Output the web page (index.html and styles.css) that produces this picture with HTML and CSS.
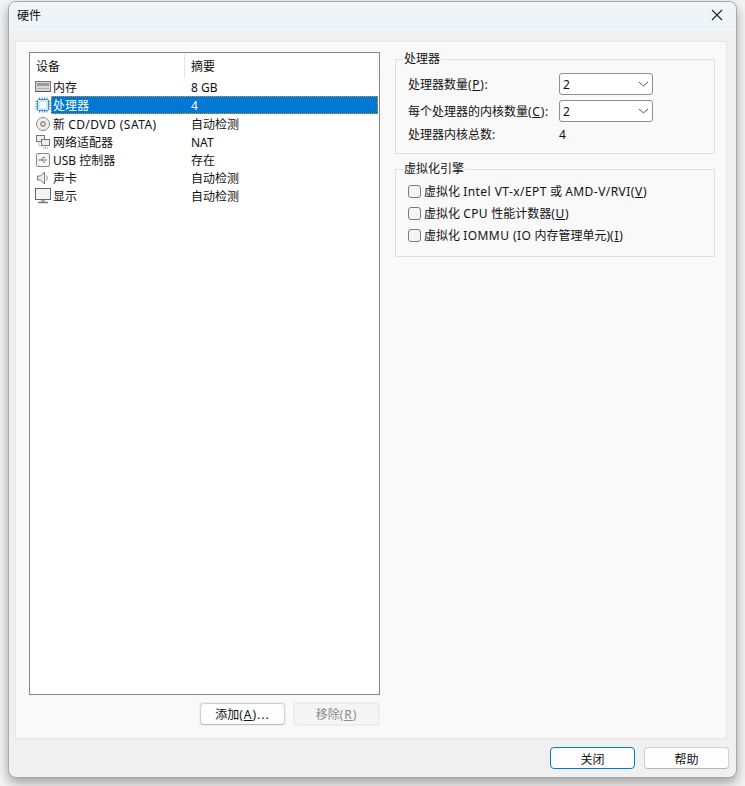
FILE: index.html
```html
<!DOCTYPE html>
<html lang="zh-CN">
<head>
  <meta charset="UTF-8">
  <title>硬件</title>
  <link rel="stylesheet" href="styles.css">
</head>
<body>
  <div class="window">
    <!-- 标题栏 -->
    <div class="titlebar">
      <span class="title">硬件</span>
      <svg class="close" width="12" height="12" viewBox="0 0 12 12"><path d="M1 1L11 11M11 1L1 11" stroke="#222" stroke-width="1.1" fill="none"/></svg>
    </div>

    <div class="panel">
      <!-- 设备列表 -->
      <div class="left">
        <div class="list">
          <div class="list-head">
            <div class="col-device">设备</div>
            <div class="col-summary">摘要</div>
          </div>
          <div class="row">
            <div class="col-device">
              <svg class="icon" viewBox="0 0 16 16"><rect x="0.5" y="2.5" width="15" height="10" fill="#d8d8d8" stroke="#777"/><rect x="2" y="4" width="12" height="3" fill="#9a9a9a"/><path d="M2 9.5H14" stroke="#b0b0b0"/><path d="M0.5 12.5H15.5" stroke="#555"/></svg>
              <span>内存</span>
            </div>
            <div class="col-summary">8 GB</div>
          </div>
          <div class="row selected">
            <div class="col-device">
              <svg class="icon" viewBox="0 0 16 16"><rect x="2.5" y="2.5" width="11" height="11" rx="1" fill="#cfe6f7" stroke="#3f8fcb"/><rect x="5" y="5" width="6" height="6" fill="#fff"/><path d="M4.5 0.5V2M7 0.5V2M9.5 0.5V2M12 0.5V2M4.5 14V15.5M7 14V15.5M9.5 14V15.5M12 14V15.5M0.5 4.5H2M0.5 7H2M0.5 9.5H2M0.5 12H2M14 4.5H15.5M14 7H15.5M14 9.5H15.5M14 12H15.5" stroke="#3f8fcb"/></svg>
              <span class="sel-text">处理器</span>
            </div>
            <div class="col-summary">4</div>
          </div>
          <div class="row">
            <div class="col-device">
              <svg class="icon" viewBox="0 0 16 16"><circle cx="8" cy="8" r="6.5" fill="#eee" stroke="#888"/><circle cx="8" cy="8" r="2.5" fill="#bbb" stroke="#888"/><circle cx="8" cy="8" r="0.8" fill="#fff"/></svg>
              <span>新 <span class="lat">CD/DVD (SATA)</span></span>
            </div>
            <div class="col-summary">自动检测</div>
          </div>
          <div class="row">
            <div class="col-device">
              <svg class="icon" viewBox="0 0 16 16"><rect x="1.5" y="1.5" width="8" height="6" fill="#eee" stroke="#777"/><rect x="6.5" y="5.5" width="8" height="6" fill="#eee" stroke="#777"/><path d="M10.5 11.5V14M8 14H13M4 7.5V12H6.5" stroke="#888" fill="none" stroke-dasharray="1 1"/></svg>
              <span>网络适配器</span>
            </div>
            <div class="col-summary">NAT</div>
          </div>
          <div class="row">
            <div class="col-device">
              <svg class="icon" viewBox="0 0 16 16"><rect x="1.5" y="1.5" width="13" height="13" rx="1.5" fill="#f6f6f6" stroke="#888"/><path d="M3.5 8H12M6 8L8 5.5H10M7 8L9 10.5H10" stroke="#777" fill="none"/></svg>
              <span>USB 控制器</span>
            </div>
            <div class="col-summary">存在</div>
          </div>
          <div class="row">
            <div class="col-device">
              <svg class="icon" viewBox="0 0 16 16"><path d="M2.5 6H5.5L9.5 2V14L5.5 10H2.5Z" fill="#eee" stroke="#777"/><path d="M11.5 5.5Q13 8 11.5 10.5" stroke="#888" fill="none"/></svg>
              <span>声卡</span>
            </div>
            <div class="col-summary">自动检测</div>
          </div>
          <div class="row">
            <div class="col-device">
              <svg class="icon" viewBox="0 0 16 16"><rect x="0.5" y="0.5" width="15" height="11" fill="#f4f4f4" stroke="#666"/><path d="M3 14.5H13" stroke="#777" stroke-width="1.4"/><path d="M6 12H10V14H6Z" fill="#aaa"/></svg>
              <span>显示</span>
            </div>
            <div class="col-summary">自动检测</div>
          </div>
        </div>

        <div class="list-buttons">
          <div class="btn-wrap"><button type="button" class="button">添加<span class="acc">(<u>A</u>)...</span></button></div>
          <div class="btn-wrap"><button type="button" class="button disabled">移除<span class="acc">(<u>R</u>)</span></button></div>
        </div>
      </div>

      <!-- 右侧设置 -->
      <div class="right">
        <fieldset class="group group-cpu">
          <legend>处理器</legend>
          <div class="field">
            <label>处理器数量<span class="acc">(<u>P</u>):</span></label>
            <div class="select">2<svg width="11" height="6" viewBox="0 0 11 6"><path d="M1 1L5.5 5L10 1" stroke="#555" fill="none"/></svg></div>
          </div>
          <div class="field">
            <label>每个处理器的内核数量<span class="acc">(<u>C</u>):</span></label>
            <div class="select">2<svg width="11" height="6" viewBox="0 0 11 6"><path d="M1 1L5.5 5L10 1" stroke="#555" fill="none"/></svg></div>
          </div>
          <div class="field total">
            <label>处理器内核总数:</label>
            <span class="total-value">4</span>
          </div>
        </fieldset>

        <fieldset class="group group-virt">
          <legend>虚拟化引擎</legend>
          <div class="check"><span class="box"></span><span>虚拟化 <span class="lat">Intel VT-x/EPT</span> 或 <span class="lat">AMD-V/RVI</span><span class="acc">(<u>V</u>)</span></span></div>
          <div class="check"><span class="box"></span><span>虚拟化 <span class="lat">CPU</span> 性能计数器<span class="acc">(<u>U</u>)</span></span></div>
          <div class="check"><span class="box"></span><span>虚拟化 <span class="lat">IOMMU (IO</span> 内存管理单元)<span class="acc">(<u>I</u>)</span></span></div>
        </fieldset>
      </div>
    </div>

    <!-- 底部按钮 -->
    <div class="footer">
      <button type="button" class="button primary">关闭</button>
      <button type="button" class="button">帮助</button>
    </div>
  </div>
</body>
</html>
```

FILE: styles.css
```css
* {
  margin: 0;
  padding: 0;
  box-sizing: border-box;
}

body {
  width: 745px;
  height: 786px;
  background-color: #f4f4f4;
  padding: 1px 8px 8px 8px;
  overflow: hidden;
  font-family: "Noto Sans", "Noto Sans CJK SC", sans-serif;
  font-size: 12px;
  color: #111;
}

.lat {
  letter-spacing: 0.45px;
}

.acc {
  letter-spacing: 0.7px;
}

.window {
  width: 729px;
  height: 777px;
  background-color: #f0f0f0;
  border: 1px solid #a9a9a9;
  border-radius: 8px;
  box-shadow: 0 5px 12px rgba(0, 0, 0, 0.35);
  overflow: hidden;
  display: flex;
  flex-direction: column;
}

/* 标题栏 */
.titlebar {
  height: 29px;
  flex-shrink: 0;
  background-color: #eff4f9;
  display: flex;
  justify-content: space-between;
  align-items: center;
  padding: 0 13px 3px 8px;
}

.title {
  font-size: 12px;
}

/* 主面板 */
.panel {
  height: 698px;
  flex-shrink: 0;
  margin: 10px 9px 0 6px;
  background-color: #f9f9f9;
  border: 1px solid #e6e6e6;
  padding: 10px 11px 0 13px;
  display: flex;
  gap: 15px;
}

.left {
  width: 351px;
  flex-shrink: 0;
}

/* 设备列表 */
.list {
  height: 643px;
  background-color: #fff;
  border: 1px solid #82878c;
  padding-top: 1px;
}

.list-head {
  display: flex;
  height: 24px;
  line-height: 26px;
}

.list-head .col-device {
  padding-left: 6px;
  border-right: 1px solid #e5e5e5;
}

.list-head .col-summary {
  flex: none;
  width: 193px;
  border-right: 1px solid #efefef;
}

.row {
  display: flex;
  height: 18px;
  line-height: 20px;
  white-space: nowrap;
  margin-right: 1px;
}

.row.selected {
  margin-bottom: 1px;
}

.col-device {
  width: 155px;
  flex-shrink: 0;
  display: flex;
  align-items: flex-start;
  gap: 2px;
  padding-left: 5px;
}

.col-summary {
  padding-left: 6px;
  flex: 1;
}

.icon {
  width: 16px;
  height: 16px;
  flex-shrink: 0;
  margin-top: 1px;
}

.sel-text {
  flex: 1;
  background-color: #0078d4;
  color: #fff;
  height: 18px;
  margin-left: -2px;
  padding-left: 1px;
  border: 1px dotted #e0913a;
  border-right: none;
  line-height: 18px;
}

.row.selected .col-summary {
  background-color: #0078d4;
  color: #fff;
  border-top: 1px dotted #e0913a;
  border-bottom: 1px dotted #e0913a;
  border-right: 1px dotted #e0913a;
  line-height: 18px;
}

.list-buttons {
  display: flex;
  justify-content: flex-end;
  gap: 7px;
  margin-top: 7px;
}

.btn-wrap {
  background-color: #f0f0f0;
  padding: 1px;
}

/* 按钮 */
.button {
  width: 85px;
  height: 22px;
  background-color: #fdfdfd;
  border: 1px solid #d0d0d0;
  border-bottom-color: #b8b8b8;
  border-radius: 4px;
  font-family: inherit;
  font-size: 12px;
  color: #111;
}

.button .acc {
  letter-spacing: 1px;
}

.button.disabled {
  background-color: #f5f5f5;
  border-color: #ebebeb;
  color: #8a8a8a;
}

.button.primary {
  border: 1px solid #0078d4;
}

/* 分组框 */
.right {
  flex: 1;
}

.group {
  border: 1px solid #dfdfdf;
  padding: 7px 12px 0;
  height: 102px;
  margin-bottom: 8px;
}

.group-virt {
  height: 95px;
  padding-top: 4px;
}

legend {
  margin-left: -5px;
  padding: 0 1px;
  line-height: 14px;
}

.field {
  display: flex;
  align-items: center;
  height: 22px;
  margin-bottom: 5px;
}

.field label {
  width: 151px;
  flex-shrink: 0;
}

.select {
  width: 94px;
  height: 22px;
  background-color: #fff;
  border: 1px solid #8e8e8e;
  border-radius: 3px;
  padding: 0 3px;
  line-height: 19px;
  font-size: 12px;
  display: flex;
  justify-content: space-between;
  align-items: center;
}

.total {
  height: 14px;
  margin-bottom: 0;
}

.check {
  display: flex;
  align-items: center;
  gap: 3px;
  height: 22px;
  white-space: nowrap;
}

.box {
  width: 13px;
  height: 13px;
  background-color: #f4f4f4;
  border: 1px solid #7a7a7a;
  border-radius: 3px;
}

/* 底部 */
.footer {
  flex: 1;
  display: flex;
  justify-content: flex-end;
  align-items: center;
  gap: 9px;
  padding-right: 7px;
}

.footer .button {
  padding-top: 1px;
}
```
